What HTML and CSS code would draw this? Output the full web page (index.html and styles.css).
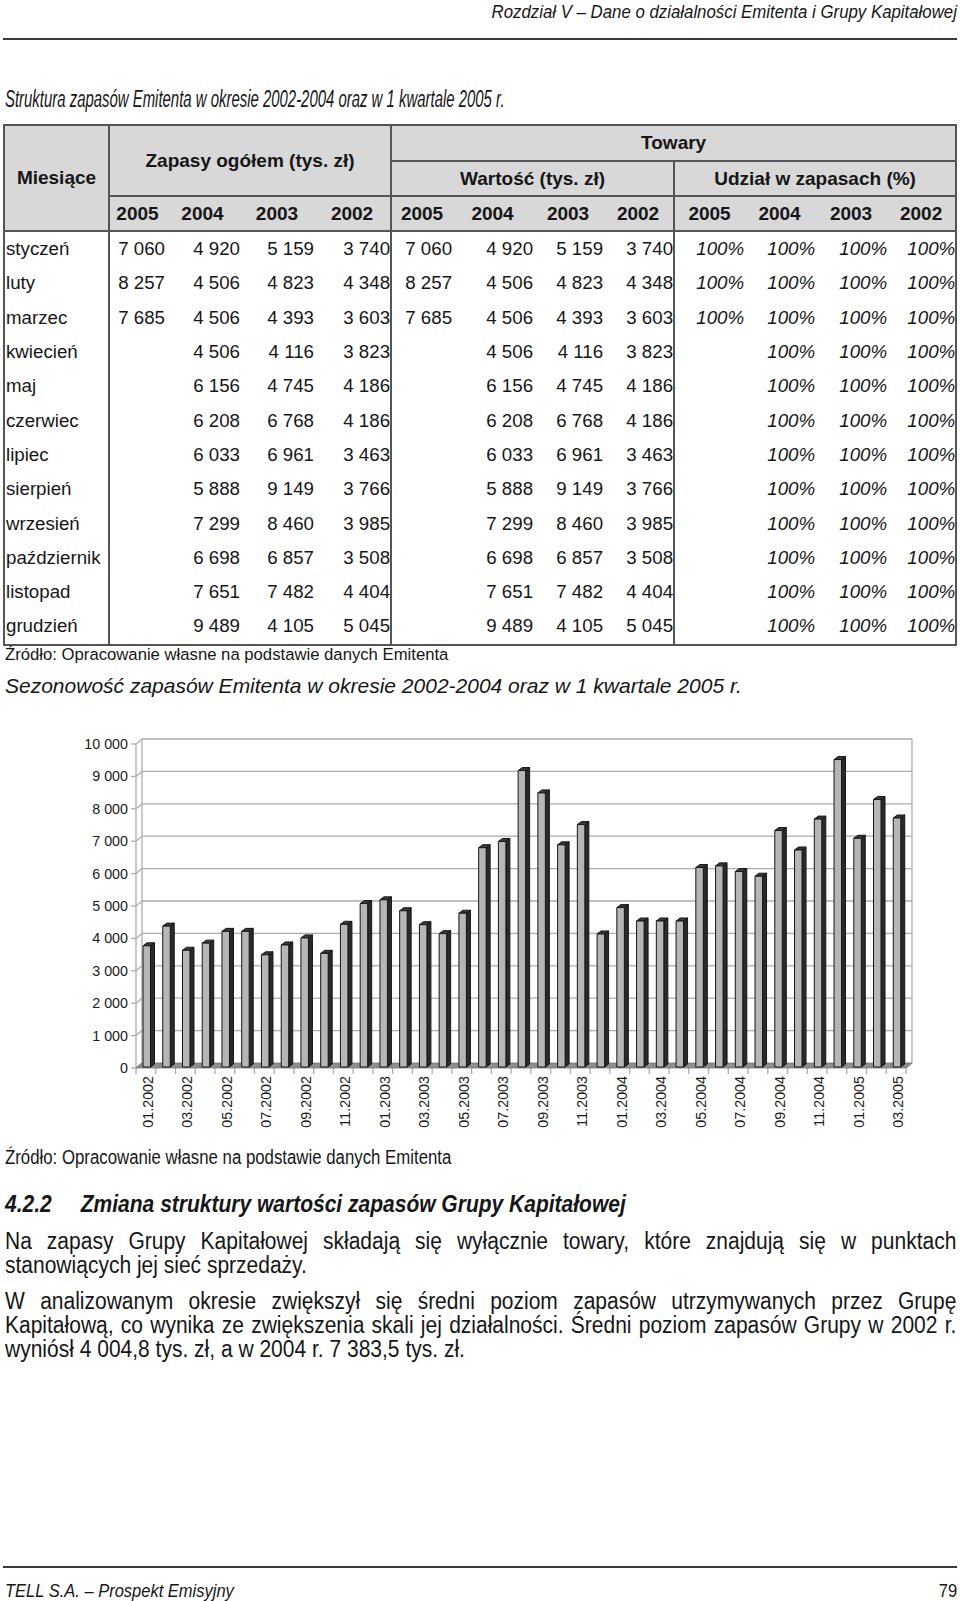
FILE: index.html
```html
<!DOCTYPE html>
<html lang="pl">
<head>
<meta charset="utf-8">
<title>Rozdział V – Dane o działalności Emitenta</title>
<link rel="stylesheet" href="styles.css">
</head>
<body>
<div class="page">
  <header class="running-head"><span class="cond-r">Rozdział V – Dane o działalności Emitenta i Grupy Kapitałowej</span></header>

  <h2 class="caption-title"><span class="cond">Struktura zapasów Emitenta w okresie 2002-2004 oraz w 1 kwartale 2005 r.</span></h2>

  <table class="stock-table">
    <colgroup>
      <col style="width:105px"><col style="width:56px"><col style="width:75px"><col style="width:74px"><col style="width:77px">
      <col style="width:61px"><col style="width:81px"><col style="width:70px"><col style="width:71px">
      <col style="width:70px"><col style="width:71px"><col style="width:72px"><col style="width:69px">
    </colgroup>
    <thead>
      <tr class="hr1">
        <th rowspan="3" class="grp">Miesiące</th>
        <th rowspan="2" colspan="4" class="grp">Zapasy ogółem (tys. zł)</th>
        <th colspan="8" class="grp">Towary</th>
      </tr>
      <tr class="hr2">
        <th colspan="4" class="grp">Wartość (tys. zł)</th>
        <th colspan="4" class="grp">Udział w zapasach (%)</th>
      </tr>
      <tr class="hr3">
        <th class="gs">2005</th><th>2004</th><th>2003</th><th class="ge">2002</th>
        <th class="gs">2005</th><th>2004</th><th>2003</th><th class="ge">2002</th>
        <th class="gs">2005</th><th>2004</th><th>2003</th><th class="ge">2002</th>
      </tr>
    </thead>
    <tbody>
      <tr><td class="m">styczeń</td><td class="gs">7 060</td><td>4 920</td><td>5 159</td><td>3 740</td><td class="gs">7 060</td><td>4 920</td><td>5 159</td><td>3 740</td><td class="gs p">100%</td><td class="p">100%</td><td class="p">100%</td><td class="p">100%</td></tr>
      <tr><td class="m">luty</td><td class="gs">8 257</td><td>4 506</td><td>4 823</td><td>4 348</td><td class="gs">8 257</td><td>4 506</td><td>4 823</td><td>4 348</td><td class="gs p">100%</td><td class="p">100%</td><td class="p">100%</td><td class="p">100%</td></tr>
      <tr><td class="m">marzec</td><td class="gs">7 685</td><td>4 506</td><td>4 393</td><td>3 603</td><td class="gs">7 685</td><td>4 506</td><td>4 393</td><td>3 603</td><td class="gs p">100%</td><td class="p">100%</td><td class="p">100%</td><td class="p">100%</td></tr>
      <tr><td class="m">kwiecień</td><td class="gs"></td><td>4 506</td><td>4 116</td><td>3 823</td><td class="gs"></td><td>4 506</td><td>4 116</td><td>3 823</td><td class="gs p"></td><td class="p">100%</td><td class="p">100%</td><td class="p">100%</td></tr>
      <tr><td class="m">maj</td><td class="gs"></td><td>6 156</td><td>4 745</td><td>4 186</td><td class="gs"></td><td>6 156</td><td>4 745</td><td>4 186</td><td class="gs p"></td><td class="p">100%</td><td class="p">100%</td><td class="p">100%</td></tr>
      <tr><td class="m">czerwiec</td><td class="gs"></td><td>6 208</td><td>6 768</td><td>4 186</td><td class="gs"></td><td>6 208</td><td>6 768</td><td>4 186</td><td class="gs p"></td><td class="p">100%</td><td class="p">100%</td><td class="p">100%</td></tr>
      <tr><td class="m">lipiec</td><td class="gs"></td><td>6 033</td><td>6 961</td><td>3 463</td><td class="gs"></td><td>6 033</td><td>6 961</td><td>3 463</td><td class="gs p"></td><td class="p">100%</td><td class="p">100%</td><td class="p">100%</td></tr>
      <tr><td class="m">sierpień</td><td class="gs"></td><td>5 888</td><td>9 149</td><td>3 766</td><td class="gs"></td><td>5 888</td><td>9 149</td><td>3 766</td><td class="gs p"></td><td class="p">100%</td><td class="p">100%</td><td class="p">100%</td></tr>
      <tr><td class="m">wrzesień</td><td class="gs"></td><td>7 299</td><td>8 460</td><td>3 985</td><td class="gs"></td><td>7 299</td><td>8 460</td><td>3 985</td><td class="gs p"></td><td class="p">100%</td><td class="p">100%</td><td class="p">100%</td></tr>
      <tr><td class="m">październik</td><td class="gs"></td><td>6 698</td><td>6 857</td><td>3 508</td><td class="gs"></td><td>6 698</td><td>6 857</td><td>3 508</td><td class="gs p"></td><td class="p">100%</td><td class="p">100%</td><td class="p">100%</td></tr>
      <tr><td class="m">listopad</td><td class="gs"></td><td>7 651</td><td>7 482</td><td>4 404</td><td class="gs"></td><td>7 651</td><td>7 482</td><td>4 404</td><td class="gs p"></td><td class="p">100%</td><td class="p">100%</td><td class="p">100%</td></tr>
      <tr><td class="m">grudzień</td><td class="gs"></td><td>9 489</td><td>4 105</td><td>5 045</td><td class="gs"></td><td>9 489</td><td>4 105</td><td>5 045</td><td class="gs p"></td><td class="p">100%</td><td class="p">100%</td><td class="p">100%</td></tr>
    </tbody>
  </table>
  <p class="source">Źródło: Opracowanie własne na podstawie danych Emitenta</p>

  <h2 class="caption-title plain">Sezonowość zapasów Emitenta w okresie 2002-2004 oraz w 1 kwartale 2005 r.</h2>

  <div class="chart" id="chart"></div>

  <p class="source narrow"><span class="cond">Źródło: Opracowanie własne na podstawie danych Emitenta</span></p>

  <h3 class="section-head"><span class="cond"><span class="num">4.2.2</span>Zmiana struktury wartości zapasów Grupy Kapitałowej</span></h3>

  <p class="body-text first">Na zapasy Grupy Kapitałowej składają się wyłącznie towary, które znajdują się w&nbsp;punktach stanowiących jej sieć sprzedaży.</p>
  <p class="body-text">W analizowanym okresie zwiększył się średni poziom zapasów utrzymywanych przez Grupę Kapitałową, co wynika ze zwiększenia skali jej działalności. Średni poziom zapasów Grupy w 2002 r. wyniósł 4 004,8 tys. zł, a w 2004 r. 7 383,5 tys. zł.</p>

  <footer class="page-foot">
    <span class="cond">TELL S.A. – Prospekt Emisyjny</span>
    <span class="cond-r pno">79</span>
  </footer>
</div>
<script src="chart.js"></script>
</body>
</html>
```

FILE: styles.css
```css
html, body {
  margin: 0;
  padding: 0;
  background: #fff;
  color: #161616;
  overflow-x: hidden;
}
.page {
  width: 960px;
  min-height: 1601px;
  box-sizing: border-box;
  padding: 0 3px 0 3px;
  display: flex;
  flex-direction: column;
  font-family: "Liberation Sans", Arial, sans-serif;
}
/* condensed (Arial Narrow–like) text */
.cond, .cond-r {
  display: inline-block;
  white-space: nowrap;
  transform-origin: left center;
}
.cond-r { transform-origin: right center; }

.running-head {
  font-style: italic;
  font-size: 19px;
  line-height: 20px;
  text-align: right;
  padding: 2px 0 16px 0;
  border-bottom: 2px solid #3a3a3a;
}
.running-head .cond-r { transform: scaleX(0.885); }

.caption-title {
  font-style: italic;
  font-weight: normal;
  font-size: 23.5px;
  line-height: 24px;
  margin: 47px 0 13px 2px;
}
.caption-title .cond { transform: scaleX(0.635); }
.caption-title.plain {
  font-size: 21px;
  margin: 10px 0 0 2px;
}
.stock-table {
  border-collapse: collapse;
  table-layout: fixed;
  width: 952px;
  font-size: 18.7px;
  border: 2px solid #555;
}
.stock-table th {
  background: #d8d8d8;
  font-weight: bold;
  font-size: 19px;
  text-align: center;
  padding: 0;
  border-top: 2px solid #555;
  border-bottom: 2px solid #555;
}
.stock-table th.grp { border-left: 2px solid #555; }
.stock-table .hr1 th { height: 34px; }
.stock-table .hr2 th { height: 33px; }
.stock-table .hr3 th { height: 33px; }
.stock-table th.gs, .stock-table td.gs { border-left: 2px solid #555; }
.stock-table td {
  padding: 0;
  height: 34.3px;
  text-align: right;
  white-space: nowrap;
}
.stock-table td.m { text-align: left; padding-left: 1px; }
.stock-table td.p { font-style: italic; }
.source {
  margin: 0 0 0 2px;
  font-size: 16.7px;
  line-height: 18px;
}
.source.narrow {
  font-size: 20px;
  line-height: 22px;
  margin-top: 6px;
}
.source.narrow .cond { transform: scaleX(0.84); }
.chart {
  height: 425px;
  margin-top: 17px;
}
.chart svg { display: block; }
.section-head {
  font-style: italic;
  font-weight: bold;
  font-size: 23px;
  line-height: 24px;
  margin: 24px 0 0 2px;
}
.section-head .cond { transform: scaleX(0.913); }
.section-head .num { display: inline-block; width: 83px; }
.body-text {
  font-size: 23px;
  line-height: 24px;
  text-align: justify;
  margin: 12px 0 0 2px;
  width: 1042px;
  transform: scaleX(0.913);
  transform-origin: left top;
}
.body-text.first { margin-top: 13px; }
.page-foot {
  margin-top: auto;
  border-top: 2px solid #3a3a3a;
  display: flex;
  justify-content: space-between;
  font-style: italic;
  font-size: 19px;
  line-height: 20px;
  padding: 13px 0 0 2px;
}
.page-foot .cond, .page-foot .cond-r { transform: scaleX(0.868); }
.page-foot .pno { font-style: normal; }
.chart .ax {
  font-family: "Liberation Sans", Arial, sans-serif;
  font-size: 14.3px;
  fill: #1a1a1a;
  stroke: none;
}
```

FILE: chart.js
```js
(function () {
  var data = [3740,4348,3603,3823,4186,4186,3463,3766,3985,3508,4404,5045,
              5159,4823,4393,4116,4745,6768,6961,9149,8460,6857,7482,4105,
              4920,4506,4506,4506,6156,6208,6033,5888,7299,6698,7651,9489,
              7060,8257,7685];
  var labels = [];
  var y0 = 2002, m = 1;
  for (var i = 0; i < data.length; i++) {
    labels.push((m < 10 ? '0' + m : '' + m) + '.' + (y0));
    m++; if (m > 12) { m = 1; y0++; }
  }
  var NS = 'http://www.w3.org/2000/svg';
  var OY = 715;               // page y of svg top
  var BX0 = 142, BX1 = 912;   // back wall x
  var BY0 = 1063 - OY;        // back wall zero
  var K = 0.0324;             // px per unit
  var DX = 6, DY = 5;         // depth offset (front = back - DX, + DY)
  var step = (BX1 - BX0) / data.length;

  var svg = document.createElementNS(NS, 'svg');
  svg.setAttribute('width', '954');
  svg.setAttribute('height', '425');
  svg.setAttribute('viewBox', '3 0 954 425');

  function el(name, attrs, parent) {
    var e = document.createElementNS(NS, name);
    for (var k in attrs) e.setAttribute(k, attrs[k]);
    (parent || svg).appendChild(e);
    return e;
  }

  var grid = el('g', {stroke: '#adadad', 'stroke-width': '1.3', fill: 'none'});
  for (var v = 0; v <= 10; v++) {
    var yb = BY0 - v * 1000 * K;
    if (v > 0) el('line', {x1: BX0, y1: yb, x2: BX1, y2: yb}, grid);
    el('line', {x1: BX0 - DX, y1: yb + DY, x2: BX0, y2: yb}, grid);
    el('line', {x1: BX0 - DX - 5, y1: yb + DY, x2: BX0 - DX, y2: yb + DY}, grid);
    var t = el('text', {x: BX0 - DX - 8, y: yb + DY, 'text-anchor': 'end', 'dominant-baseline': 'central', 'class': 'ax'});
    t.textContent = v === 0 ? '0' : (v === 10 ? '10 000' : v + ' 000');
  }
  var yTop = BY0 - 10000 * K;
  el('line', {x1: BX0, y1: yTop, x2: BX0, y2: BY0}, grid);
  el('line', {x1: BX1, y1: yTop, x2: BX1, y2: BY0}, grid);
  el('line', {x1: BX1, y1: BY0, x2: BX1 - DX, y2: BY0 + DY}, grid);
  el('line', {x1: BX0 - DX, y1: yTop + DY, x2: BX0 - DX, y2: BY0 + DY}, grid);

  el('polygon', {points: (BX0 - DX) + ',' + (BY0 + DY) + ' ' + BX0 + ',' + BY0 + ' ' + BX1 + ',' + BY0 + ' ' + (BX1 - DX) + ',' + (BY0 + DY),
    fill: '#8e8e8e', stroke: '#777', 'stroke-width': '0.8'});

  for (var j = 0; j <= data.length; j++) {
    var xt = BX0 - DX + j * step;
    el('line', {x1: xt, y1: BY0 + DY, x2: xt, y2: BY0 + DY + 6}, grid);
  }

  var bars = el('g', {stroke: '#161616', 'stroke-width': '1', 'stroke-linejoin': 'round'});
  var W = 7.5, D = 4, H = 3;
  for (var i2 = 0; i2 < data.length; i2++) {
    var x = BX0 + 1 + i2 * step;
    var yb2 = BY0 + 4;
    var top = yb2 - data[i2] * K;
    el('polygon', {points: (x + W) + ',' + top + ' ' + (x + W + D) + ',' + (top - H) + ' ' + (x + W + D) + ',' + (yb2 - H) + ' ' + (x + W) + ',' + yb2, fill: '#2a2a2a'}, bars);
    el('polygon', {points: x + ',' + top + ' ' + (x + D) + ',' + (top - H) + ' ' + (x + W + D) + ',' + (top - H) + ' ' + (x + W) + ',' + top, fill: '#3a3a3a'}, bars);
    el('rect', {x: x, y: top, width: W, height: yb2 - top, fill: '#b6b6b6'}, bars);
    if (i2 % 2 === 0) {
      var cx = x + W / 2 + 1;
      var ly = BY0 + DY + 8;
      var lt = el('text', {x: 0, y: 0, 'text-anchor': 'end', 'dominant-baseline': 'central', 'class': 'ax',
        transform: 'translate(' + cx + ',' + ly + ') rotate(-90)'});
      lt.textContent = labels[i2];
    }
  }
  document.getElementById('chart').appendChild(svg);
})();
```
